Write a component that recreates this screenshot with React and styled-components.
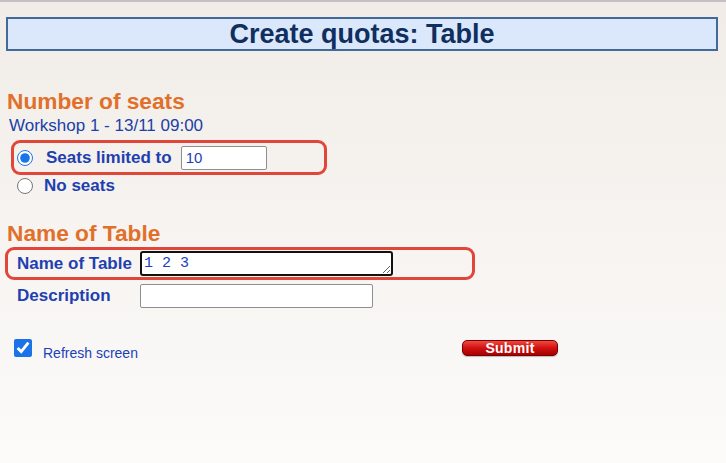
import styled, { createGlobalStyle } from "styled-components";

const GlobalStyle = createGlobalStyle`
  html, body {
    margin: 0;
    padding: 0;
  }
  body {
    font-family: "Liberation Sans", Arial, sans-serif;
    background: linear-gradient(#f1ece7, #fcfbfa);
    min-height: 463px;
    border-top: 2px solid #c6bfc7;
    box-sizing: border-box;
  }
`;

const Page = styled.div`
  padding: 15px 8px 0 6px;
`;

const TitleBox = styled.div`
  height: 34px;
  box-sizing: border-box;
  border: 2px solid #41699a;
  background: #dbe7fb;
  display: flex;
  align-items: center;
  justify-content: center;
  font-size: 27px;
  font-weight: bold;
  color: #0f2f5f;
`;

const Heading = styled.h2`
  margin: ${(p) => p.$top}px 0 0 1px;
  font-size: 22.7px;
  line-height: 26px;
  font-weight: bold;
  color: #e0702a;
`;

const Session = styled.div`
  margin-top: 2px;
  padding-left: 3px;
  font-size: 17px;
  line-height: 20px;
  color: #2040a8;
`;

const Highlight = styled.div`
  display: flex;
  align-items: center;
  box-sizing: border-box;
  width: ${(p) => p.$width}px;
  height: ${(p) => p.$height}px;
  margin: ${(p) => p.$top}px 0 0 ${(p) => p.$left}px;
  padding-left: ${(p) => p.$pad}px;
  border: 3px solid #e0473a;
  border-radius: 9px;
`;

const Row = styled.div`
  display: flex;
  align-items: center;
  height: ${(p) => p.$height}px;
  margin-top: ${(p) => p.$top || 0}px;
  padding-left: ${(p) => p.$pad}px;
`;

const Radio = styled.input.attrs({ type: "radio" })`
  width: 16px;
  height: 16px;
  margin: 0;
  accent-color: #1a73e8;
`;

const Label = styled.label`
  font-size: 17px;
  font-weight: bold;
  color: #1f3fb0;
  margin-left: ${(p) => p.$gap || 0}px;
  width: ${(p) => (p.$width ? `${p.$width}px` : "auto")};
  white-space: nowrap;
`;

const TextInput = styled.input`
  box-sizing: border-box;
  width: ${(p) => p.$width}px;
  height: 24px;
  margin-left: ${(p) => p.$gap || 0}px;
  border: 1px solid #8f8f8f;
  border-radius: 2px;
  background: #fff;
  padding: 0 4px;
  font-family: "Liberation Sans", Arial, sans-serif;
  font-size: 15px;
  color: #1f3fb0;
`;

const NameArea = styled.textarea`
  box-sizing: border-box;
  width: 253px;
  height: 25px;
  border: 2px solid #111;
  border-radius: 3px;
  background: #fff;
  padding: 2px 2px;
  font-family: "Liberation Mono", "Courier New", monospace;
  font-size: 15px;
  line-height: 17px;
  color: #2040c0;
  outline: none;
  resize: both;
  overflow: hidden;
`;

const Footer = styled.div`
  display: flex;
  align-items: flex-start;
  margin-top: 31px;
`;

const RefreshGroup = styled.div`
  display: flex;
  align-items: flex-start;
  width: 456px;
  padding-left: 8px;
  box-sizing: border-box;
`;

const Check = styled.input.attrs({ type: "checkbox" })`
  width: 18px;
  height: 18px;
  margin: 0;
  accent-color: #1a73e8;
`;

const SmallLabel = styled.label`
  margin: 6px 0 0 11px;
  font-size: 14px;
  line-height: 16px;
  color: #2040b8;
`;

const SubmitButton = styled.button`
  width: 96px;
  height: 16px;
  margin-top: 1px;
  padding: 0;
  border: 1px solid #7a0000;
  border-radius: 5px;
  background: linear-gradient(#f04a40, #d01010 50%, #a80000);
  color: #fff;
  font-family: "Liberation Sans", Arial, sans-serif;
  font-size: 14px;
  font-weight: bold;
  line-height: 14px;
  letter-spacing: 0.3px;
  box-shadow: 0 1px 1px rgba(0, 0, 0, 0.25);
`;

export default function App() {
  return (
    <Page>
      <GlobalStyle />
      <TitleBox>Create quotas: Table</TitleBox>

      <Heading $top={37}>Number of seats</Heading>
      <Session>Workshop 1 - 13/11 09:00</Session>

      <Highlight $width={316} $height={35} $top={4} $left={5} $pad={3}>
        <Radio name="seats" defaultChecked />
        <Label $gap={13}>Seats limited to</Label>
        <TextInput $width={86} $gap={9} defaultValue="10" />
      </Highlight>
      <Row $height={22} $pad={11}>
        <Radio name="seats" />
        <Label $gap={11}>No seats</Label>
      </Row>

      <Heading $top={23}>Name of Table</Heading>
      <Highlight $width={470} $height={33} $top={1} $left={-1} $pad={9}>
        <Label $width={123}>Name of Table</Label>
        <NameArea defaultValue="1 2 3" />
      </Highlight>
      <Row $height={24} $top={4} $pad={11}>
        <Label $width={123}>Description</Label>
        <TextInput $width={233} />
      </Row>

      <Footer>
        <RefreshGroup>
          <Check defaultChecked />
          <SmallLabel>Refresh screen</SmallLabel>
        </RefreshGroup>
        <SubmitButton>Submit</SubmitButton>
      </Footer>
    </Page>
  );
}
